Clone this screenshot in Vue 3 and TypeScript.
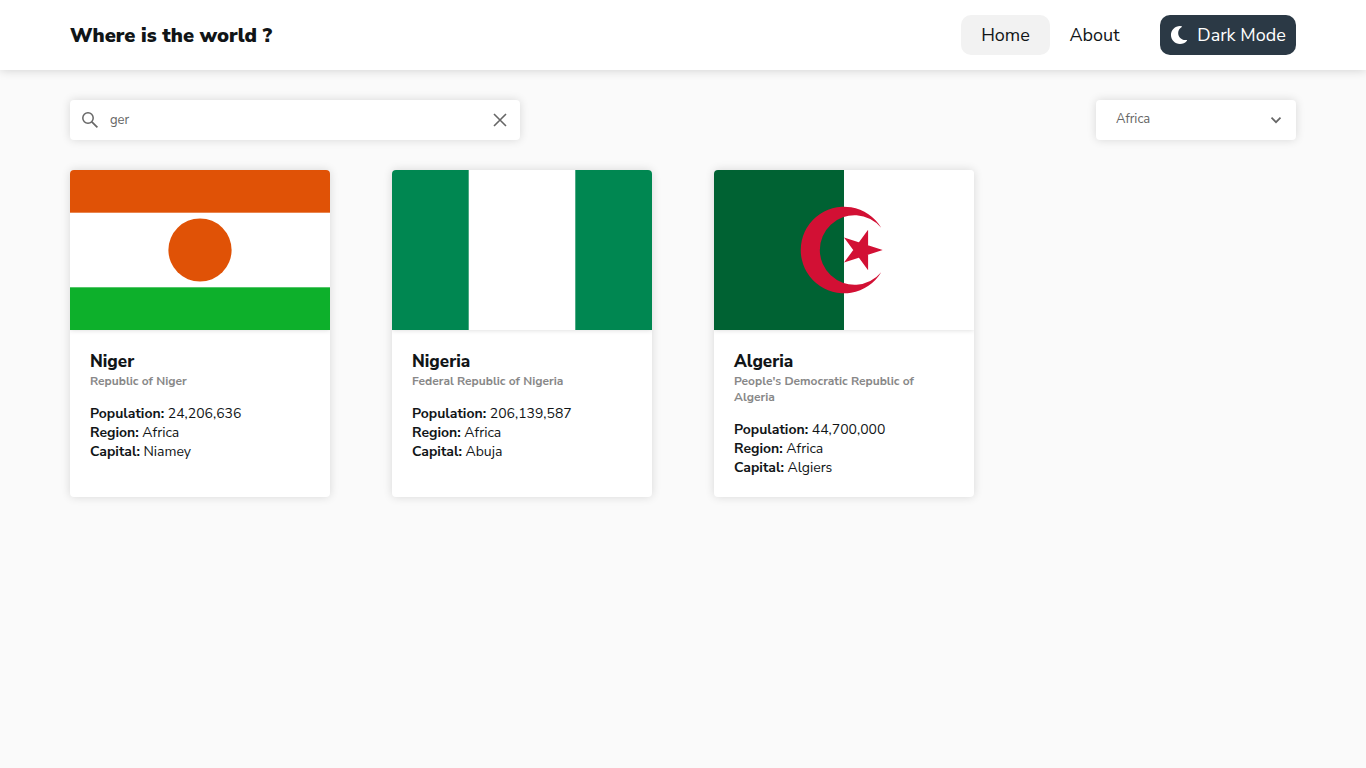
<script setup lang="ts">
import { computed, ref } from 'vue'

interface Country {
  name: string
  official: string
  population: number
  region: string
  capital: string
}

const countries: Country[] = [
  { name: 'Niger', official: 'Republic of Niger', population: 24206636, region: 'Africa', capital: 'Niamey' },
  { name: 'Nigeria', official: 'Federal Republic of Nigeria', population: 206139587, region: 'Africa', capital: 'Abuja' },
  { name: 'Algeria', official: "People's Democratic Republic of Algeria", population: 44700000, region: 'Africa', capital: 'Algiers' },
]
const query = ref('ger')
const region = ref('Africa')

const shown = computed(() =>
  countries.filter(
    (c) => c.region === region.value && c.name.toLowerCase().includes(query.value.toLowerCase()),
  ),
)
</script>

<template>
  <div class="page">
    <header class="bar">
      <h1>Where is the world ?</h1>
      <nav>
        <a href="#home" class="link active">Home</a>
        <a href="#about" class="link">About</a>
        <button type="button" class="mode">
          <svg viewBox="0 0 512 512" aria-hidden="true">
            <path fill="currentColor" d="M283.211 512c78.962 0 151.079-35.925 198.857-94.792 7.068-8.708-.639-21.43-11.562-19.35-124.203 23.654-238.262-71.576-238.262-196.954 0-72.222 38.662-138.635 101.498-174.394 9.686-5.512 7.25-20.197-3.756-22.23A258.156 258.156 0 0 0 283.211 0c-141.309 0-256 114.511-256 256 0 141.309 114.511 256 256 256z" />
          </svg>
          <span>Dark Mode</span>
        </button>
      </nav>
    </header>

    <main>
      <div class="filters">
        <div class="search">
          <svg class="glass" viewBox="0 0 22 22" aria-hidden="true">
            <g fill="none" stroke="currentColor" stroke-width="1.5">
              <circle cx="9" cy="9" r="5.2" />
              <path d="M12.8 12.8l5.6 5.6" stroke-width="1.7" />
            </g>
          </svg>
          <input v-model="query" type="text" aria-label="Search for a country" />
          <button type="button" class="clear" aria-label="Clear search" @click="query = ''">
            <svg viewBox="0 0 20 20" aria-hidden="true">
              <path d="M4 4l12 12M16 4L4 16" fill="none" stroke="currentColor" stroke-width="1.6" />
            </svg>
          </button>
        </div>
        <div class="region">
          <select v-model="region" aria-label="Filter by region">
            <option>Africa</option>
            <option>Americas</option>
            <option>Asia</option>
            <option>Europe</option>
            <option>Oceania</option>
          </select>
          <svg viewBox="0 0 20 20" aria-hidden="true">
            <path d="M5.5 7.7l4.5 4.5 4.5-4.5" fill="none" stroke="currentColor" stroke-width="1.7" />
          </svg>
        </div>
      </div>

      <section class="grid">
        <article v-for="c in shown" :key="c.name" class="card">
          <svg class="flag" viewBox="0 0 260 160" preserveAspectRatio="xMidYMid slice" role="img" :aria-label="`Flag of ${c.name}`">
            <rect width="260" height="160" fill="#fff" />
            <g v-if="c.name === 'Niger'">
              <rect width="260" height="42.7" fill="#e05206" />
              <rect y="117.3" width="260" height="42.7" fill="#0db02b" />
              <circle cx="130" cy="80" r="31.6" fill="#e05206" />
            </g>
            <g v-else-if="c.name === 'Nigeria'" fill="#008751">
              <rect width="76.7" height="160" />
              <rect x="183.3" width="76.7" height="160" />
            </g>
            <g v-else>
              <rect width="130" height="160" fill="#006233" />
              <path fill="#d21034" d="M167.2 57.8A43.3 43.3 0 1 0 167.2 102.2A34.7 34.7 0 1 1 167.2 57.8zM168.7 80L130 92.6L154.1 59.8L154.1 100.2L130 67.4z" />
            </g>
          </svg>
          <div class="body">
            <h2>{{ c.name }}</h2>
            <p class="official">{{ c.official }}</p>
            <p><strong>Population:</strong> {{ c.population.toLocaleString('en-US') }}</p>
            <p><strong>Region:</strong> {{ c.region }}</p>
            <p><strong>Capital:</strong> {{ c.capital }}</p>
          </div>
        </article>
      </section>
    </main>
  </div>
</template>

<style>
body {
  margin: 0;
  background: #fafafa;
}
</style>

<style scoped>
.page {
  min-height: 100vh;
  background: #fafafa;
  color: #111517;
  font-family: "Nunito Sans", Nunito, "Open Sans", sans-serif;
  font-size: 14px;
}
.page * {
  box-sizing: border-box;
}
h1,
h2,
p {
  margin: 0;
}
.bar {
  display: flex;
  align-items: center;
  justify-content: space-between;
  height: 70px;
  padding: 0 70px;
  background: #fff;
  box-shadow: 0 0 10px rgba(0, 0, 0, 0.18);
}
h1 {
  font-size: 20px;
  line-height: 27px;
  font-weight: 900;
}
nav {
  display: flex;
  align-items: center;
}
.link,
.mode {
  display: flex;
  align-items: center;
  justify-content: center;
  height: 40px;
  border-radius: 10px;
  font-size: 18px;
}
.link {
  min-width: 89px;
  padding: 0 16px;
  color: #111517;
  text-decoration: none;
}
.link.active {
  background: #f2f2f2;
}
.mode {
  gap: 9px;
  min-width: 136px;
  margin-left: 21px;
  padding: 0 10px;
  border: 0;
  background: #2b3945;
  color: #fff;
  font-family: inherit;
}
.mode svg {
  width: 18px;
  height: 18px;
}
main {
  padding: 30px 70px;
}
.filters {
  display: flex;
  justify-content: space-between;
  gap: 30px;
  margin-bottom: 30px;
}
.search,
.region {
  display: flex;
  align-items: center;
  height: 40px;
  border-radius: 4px;
  background: #fff;
  color: #666;
  box-shadow: 0 0 10px rgba(0, 0, 0, 0.14);
}
.search {
  flex: 0 1 450px;
}
.glass {
  flex: none;
  width: 22px;
  height: 22px;
  margin: 0 9px;
}
input,
select {
  flex: 1;
  min-width: 0;
  height: 40px;
  border: 0;
  outline: 0;
  background: transparent;
  color: #666;
  font-family: inherit;
  font-size: 13px;
}
input {
  padding: 0;
}
.clear {
  display: flex;
  flex: none;
  padding: 10px;
  border: 0;
  background: transparent;
  color: #666;
}
.clear svg,
.region svg {
  width: 20px;
  height: 20px;
}
.region {
  display: grid;
  grid-template-columns: 1fr 30px;
  width: 200px;
}
select {
  grid-area: 1 / 1 / 2 / 3;
  padding: 0 30px 2px 20px;
  appearance: none;
}
.region svg {
  grid-area: 1 / 2;
  pointer-events: none;
}
.grid {
  display: grid;
  grid-template-columns: repeat(auto-fill, 260px);
  justify-content: space-between;
  gap: 50px;
}
.card {
  overflow: hidden;
  border-radius: 4px;
  background: #fff;
  box-shadow: 0 0 10px rgba(0, 0, 0, 0.14);
}
.flag {
  display: block;
  width: 100%;
  height: 160px;
  box-shadow: 0 0 5px rgba(0, 0, 0, 0.16);
}
.body {
  padding: 20px;
  line-height: 19px;
}
h2 {
  font-size: 17px;
  line-height: 23px;
  font-weight: 800;
}
.official {
  margin-bottom: 15px;
  color: #888;
  font-size: 12px;
  line-height: 16px;
  font-weight: 700;
}
</style>
